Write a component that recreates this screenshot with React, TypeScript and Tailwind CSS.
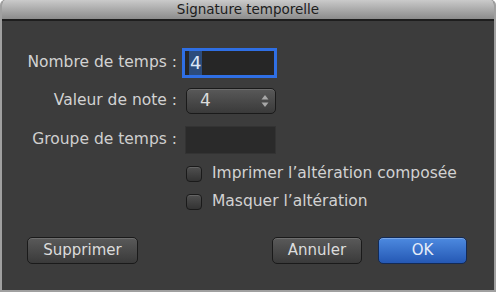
import React from 'react';

const font = { fontFamily: '"DejaVu Sans", Verdana, sans-serif' };

function Checkbox({ label }: { label: string }) {
  return (
    <div className="flex items-center h-[20px]">
      <div className="w-[16px] h-[16px] rounded-[4px] border border-[#1a1a1a] bg-gradient-to-b from-[#505050] to-[#333333] shadow-[inset_0_1px_0_rgba(255,255,255,0.12)]" />
      <span className="ml-[10px] text-[15.5px] text-[#d2d2d2] leading-none">{label}</span>
    </div>
  );
}

function Button({ label, w, primary }: { label: string; w: string; primary?: boolean }) {
  return (
    <button
      className={`${w} h-[27px] rounded-[5px] border text-[15px] leading-none flex items-center justify-center ${
        primary
          ? 'border-[#132a55] bg-gradient-to-b from-[#4d8ae0] to-[#2558b4] text-[#e6edf8] shadow-[inset_0_1px_0_rgba(255,255,255,0.25)]'
          : 'border-[#1a1a1a] bg-gradient-to-b from-[#5a5a5a] to-[#3a3a3a] text-[#dcdcdc] shadow-[inset_0_1px_0_rgba(255,255,255,0.12)]'
      }`}
    >
      {label}
    </button>
  );
}

export default function App() {
  return (
    <div style={font} className="w-[496px] h-[292px] flex flex-col bg-[#3c3c3c] rounded-t-[5px] overflow-hidden border-x-2 border-b-2 border-[#a0a0a0]">
      <div className="h-[19px] shrink-0 flex items-center justify-center bg-gradient-to-b from-[#cacaca] to-[#8c8c8c] text-[13.5px] text-[#1c1c1c]">
        Signature temporelle
      </div>
      <div className="h-[2px] shrink-0 bg-[#1e1e1e]" />

      <div className="flex flex-col pt-[27px]">
        <div className="flex items-center h-[30px]">
          <div className="w-[175px] text-right text-[15.5px] text-[#d2d2d2] whitespace-nowrap">Nombre de temps :</div>
          <div className="ml-[8px] w-[89px] h-[24px] bg-[#262626] shadow-[0_0_0_3px_#2f6fe4] flex items-center pl-[4px]">
            <span className="bg-[#2c4c7c] text-[#dbe6f6] text-[18px] leading-[24px] px-[1px]">4</span>
          </div>
        </div>

        <div className="flex items-center h-[26px] mt-[10px]">
          <div className="w-[175px] text-right text-[15.5px] text-[#d2d2d2] whitespace-nowrap">Valeur de note :</div>
          <div className="ml-[9px] w-[90px] h-[26px] rounded-[5px] border border-[#1a1a1a] bg-gradient-to-b from-[#595959] to-[#3a3a3a] shadow-[inset_0_1px_0_rgba(255,255,255,0.12)] flex items-center pl-[13px] pr-[6px]">
            <span className="flex-1 text-[17px] text-[#dcdcdc]">4</span>
            <svg width="8" height="14" viewBox="0 0 8 14">
              <path d="M4 1 L7.5 5.5 L0.5 5.5 Z" fill="#a8a8a8" />
              <path d="M4 13 L7.5 8.5 L0.5 8.5 Z" fill="#a8a8a8" />
            </svg>
          </div>
        </div>

        <div className="flex items-center h-[28px] mt-[12px]">
          <div className="w-[175px] text-right text-[15.5px] text-[#cfcfcf] whitespace-nowrap">Groupe de temps :</div>
          <div className="ml-[8px] w-[91px] h-[28px] bg-[#2a2a2a] border border-[#333333]" />
        </div>

        <div className="flex flex-col pl-[184px] mt-[10px] gap-[8px]">
          <Checkbox label="Imprimer l’altération composée" />
          <Checkbox label="Masquer l’altération" />
        </div>

        <div className="flex items-center mt-[25px] pl-[25px] pr-[27px]">
          <Button label="Supprimer" w="w-[111px]" />
          <div className="flex-1" />
          <Button label="Annuler" w="w-[90px]" />
          <div className="w-[16px]" />
          <Button label="OK" w="w-[89px]" primary />
        </div>
      </div>
    </div>
  );
}
